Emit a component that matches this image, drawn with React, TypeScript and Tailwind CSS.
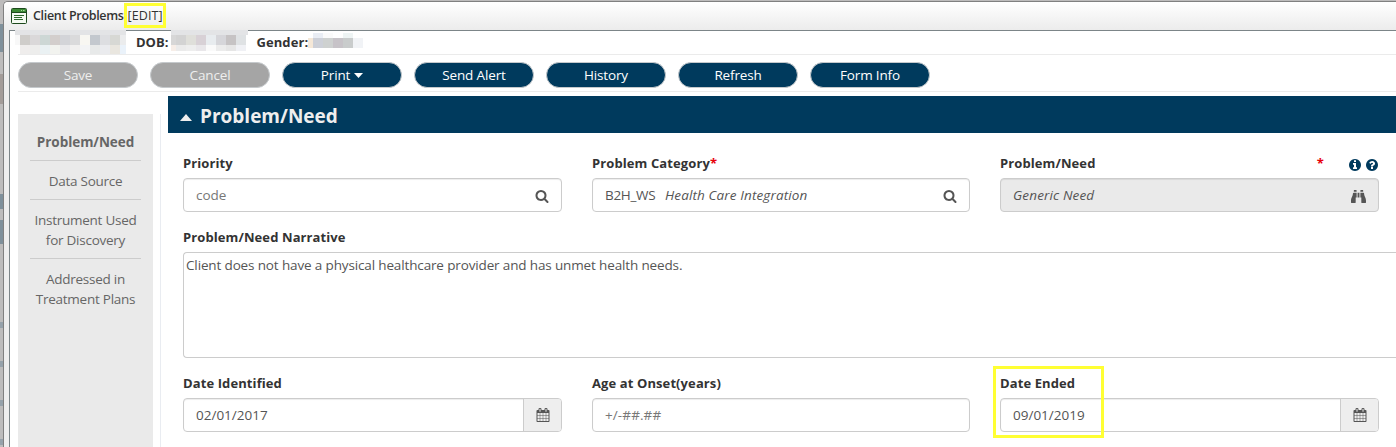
import React from "react";
import { FaBinoculars } from "react-icons/fa";

const SEARCH = "M1216 832q0-185-131.5-316.5t-316.5-131.5-316.5 131.5-131.5 316.5 131.5 316.5 316.5 131.5 316.5-131.5 131.5-316.5zm512 832q0 52-38 90t-90 38q-54 0-90-38l-343-342q-179 124-399 124-143 0-273.5-55.5t-225-150-150-225-55.5-273.5 55.5-273.5 150-225 225-150 273.5-55.5 273.5 55.5 225 150 150 225 55.5 273.5q0 220-124 399l343 343q37 37 37 90z";
const INFO = "M1152 1376v-160q0-14-9-23t-23-9h-96v-512q0-14-9-23t-23-9h-320q-14 0-23 9t-9 23v160q0 14 9 23t23 9h96v320h-96q-14 0-23 9t-9 23v160q0 14 9 23t23 9h448q14 0 23-9t9-23zm-128-896v-160q0-14-9-23t-23-9h-192q-14 0-23 9t-9 23v160q0 14 9 23t23 9h192q14 0 23-9t9-23zm640 416q0 209-103 385.5t-279.5 279.5-385.5 103-385.5-103-279.5-279.5-103-385.5 103-385.5 279.5-279.5 385.5-103 385.5 103 279.5 279.5 103 385.5z";
const HELP = "M1024 1376v-192q0-14-9-23t-23-9h-192q-14 0-23 9t-9 23v192q0 14 9 23t23 9h192q14 0 23-9t9-23zm256-672q0-88-55.5-163t-138.5-116-170-41q-243 0-371 213-15 24 8 42l132 100q7 6 19 6 16 0 25-12 53-68 86-92 34-24 86-24 48 0 85.5 26t37.5 59q0 38-20 61t-68 45q-63 28-115.5 86.5t-52.5 125.5v36q0 14 9 23t23 9h192q14 0 23-9t9-23q0-19 21.5-49.5t54.5-49.5q32-18 49-28.5t46-35 44.5-48 28-60.5 12.5-81zm384 192q0 209-103 385.5t-279.5 279.5-385.5 103-385.5-103-279.5-279.5-103-385.5 103-385.5 279.5-279.5 385.5-103 385.5 103 279.5 279.5 103 385.5z";
const CALENDAR = "M192 1664h288v-288h-288v288zm352 0h320v-288h-320v288zm-352-352h288v-320h-288v320zm352 0h320v-320h-320v320zm-352-384h288v-288h-288v288zm736 736h320v-288h-320v288zm-384-736h320v-288h-320v288zm768 736h288v-288h-288v288zm-384-352h320v-320h-320v320zm-352-864v-288q0-13-9.5-22.5t-22.5-9.5h-64q-13 0-22.5 9.5t-9.5 22.5v288q0 13 9.5 22.5t22.5 9.5h64q13 0 22.5-9.5t9.5-22.5zm736 864h288v-320h-288v320zm-384-384h320v-288h-320v288zm384 0h288v-288h-288v288zm32-480v-288q0-13-9.5-22.5t-22.5-9.5h-64q-13 0-22.5 9.5t-9.5 22.5v288q0 13 9.5 22.5t22.5 9.5h64q13 0 22.5-9.5t9.5-22.5zm384-64v1280q0 52-38 90t-90 38h-1408q-52 0-90-38t-38-90v-1280q0-52 38-90t90-38h128v-96q0-66 47-113t113-47h64q66 0 113 47t47 113v96h384v-96q0-66 47-113t113-47h64q66 0 113 47t47 113v96h128q52 0 90 38t38 90z";

function Glyph({ d, className }: { d: string; className: string }) {
  return (
    <svg viewBox="0 0 1792 1792" className={className} fill="currentColor">
      <path d={d} />
    </svg>
  );
}

function FormIcon() {
  return (
    <svg viewBox="0 0 16 16" className="h-4 w-4 shrink-0">
      <rect x="0.5" y="0.5" width="15" height="15" rx="1" fill="#f4faf2" stroke="#1d4a1d" />
      <path d="M1 1h14v3H1z" fill="#3c8a35" />
      <path d="M1 4.5h14" stroke="#1d4a1d" />
      <path d="M10 2.5h1M12 2.5h1.5" stroke="#a5e09c" />
      <path d="M3 7.5h10M3 9.5h8M3 11.5h9" stroke="#2f6a2d" />
    </svg>
  );
}

function Cells({ colors, className }: { colors: string[]; className: string }) {
  return (
    <div className={`flex ${className}`}>
      {colors.map((c, i) => (
        <div key={i} className="w-[10px] shrink-0" style={{ backgroundColor: c }} />
      ))}
    </div>
  );
}

const actions = [
  { label: "Save", off: true },
  { label: "Cancel", off: true },
  { label: "Print", menu: true },
  { label: "Send Alert" },
  { label: "History" },
  { label: "Refresh" },
  { label: "Form Info" },
];

function Label({ children }: { children: React.ReactNode }) {
  return <div className="flex h-[20px] items-center text-[13px] leading-[20px] font-bold tracking-[0.1px] whitespace-pre text-[#333]">{children}</div>;
}

function Box({ children, muted = false }: { children: React.ReactNode; muted?: boolean }) {
  return (
    <div className={`mt-[5px] flex h-[34px] items-stretch overflow-hidden rounded-[4px] border border-[#ccc] text-[13.5px] text-[#555] shadow-[inset_0_1px_1px_rgba(0,0,0,0.075)] ${muted ? "bg-[#eaeaea]" : "bg-white"}`}>
      {children}
    </div>
  );
}

function DateField({ label, value }: { label: string; value: string }) {
  return (
    <div>
      <Label>{label}</Label>
      <Box>
        <span className="flex flex-1 items-center pt-px pl-3">{value}</span>
        <span className="flex w-[38px] items-center justify-center border-l border-[#ccc] bg-[#eee]">
          <Glyph d={CALENDAR} className="h-[14px] w-[14px]" />
        </span>
      </Box>
    </div>
  );
}

export default function App() {
  return (
    <div className="relative flex h-[447px] w-[1396px] overflow-hidden bg-[#bdbcbc] font-['Open_Sans','Noto_Sans',sans-serif]">
      <div className="flex w-[3px] shrink-0 flex-col pt-6">
        <div className="h-[28px] bg-[#7f909b]" />
        <div className="mt-[22px] h-[30px] bg-[#a39c99]" />
        <div className="mt-[90px] h-[15px] bg-[#7f909b]" />
        <div className="mt-[11px] h-[24px] bg-[#7f909b]" />
        <div className="mt-[78px] h-[6px] bg-[#96a2ab]" />
        <div className="mt-[33px] h-[6px] bg-[#96a2ab]" />
        <div className="mt-[33px] h-[6px] bg-[#96a2ab]" />
        <div className="mt-[33px] h-[6px] bg-[#96a2ab]" />
      </div>
      <div className="mt-px flex min-w-0 flex-1 flex-col rounded-tl-[5px] border-t border-l border-[#808080] bg-[#eee]">
        <header className="flex h-[28px] shrink-0 items-center rounded-tl-[4px] bg-linear-to-b from-white to-[#ececec] pl-[7px] text-[12.5px] text-[#333]">
          <FormIcon />
          <span className="ml-[6px] pt-px font-semibold tracking-[-0.32px]">Client Problems <span className="ml-px font-normal tracking-[0.1px]">[EDIT]</span></span>
        </header>
        <main className="ml-[5px] flex min-h-0 flex-1 flex-col border-t border-l border-[#7c8588] bg-white">
          <div className="ml-2 flex h-[24px] shrink-0 items-center border-b border-[#ebebeb] text-[13px] font-bold text-[#333]">
            <div className="-mt-px -ml-[3px] flex h-[24px] w-[111px] shrink-0 flex-col self-start overflow-hidden bg-white">
              <div className="h-[5px] bg-[#e3e4e6]" />
              <Cells className="-ml-[5px] h-[10px]" colors={["#f8f8f8", "#cfcdca", "#dad8d9", "#cdd7d5", "#d3cecc", "#d3d4d8", "#dadadb", "#f8f7f2", "#c3c8ce", "#dddee1", "#d7d8d4", "#ebeced"]} />
              <Cells className="-ml-[5px] h-[9px]" colors={["#ffffff", "#efedec", "#ededec", "#eaf1f3", "#f2f3ef", "#e9e9eb", "#f1f0ef", "#f3f4f5", "#e7e9e9", "#eaebee", "#e9e6df", "#eaf2fa"]} />
            </div>
            <span className="ml-[10px]">DOB:</span>
            <div className="-mt-px ml-[3px] flex h-[21px] w-[77px] shrink-0 flex-col self-start overflow-hidden bg-white">
              <div className="h-[5px] bg-[#e3e4e6]" />
              <Cells className="-ml-[5px] h-[10px]" colors={["#d7d7d7", "#d3d3d3", "#dfdfda", "#d8d1d6", "#e8ecef", "#d6d6da", "#c6c3c4", "#dfe2e4"]} />
              <Cells className="-ml-[5px] h-[6px]" colors={["#f7eee8", "#ebebeb", "#eeeeee", "#e9e7ea", "#fafafa", "#ececec", "#e6e6e6", "#f0f1f5"]} />
            </div>
            <span className="ml-[8px] tracking-[0.1px]">Gender:</span>
            <div className="mt-[2px] flex h-[15px] w-[56px] shrink-0 flex-col self-start overflow-hidden">
              <Cells className="-ml-[5px] h-[5px]" colors={["#ffffff", "#e9edf4", "#fafafa", "#ffffff", "#eef4f4", "#ffffff"]} />
              <Cells className="-ml-[5px] h-[10px]" colors={["#f5e8d8", "#cdd0d8", "#ced1d0", "#c7c3c8", "#c9cccc", "#f1f3f6"]} />
            </div>
          </div>
          <div className="ml-2 flex h-[37px] shrink-0 items-start gap-3 border-b border-[#ebebeb] pt-[7px]">
            {actions.map((a) => (
              <button key={a.label} className={`flex h-[26px] w-[120px] items-center justify-center gap-1 rounded-full border border-[#c5c9cc] pt-px text-[13.5px] tracking-[-0.15px] ${a.off ? "bg-[#a5a5a5] text-[#eee]" : "bg-[#003a5d] text-white"}`}>
                {a.label}
                {a.menu && <svg viewBox="0 0 9 5" className="h-[5px] w-[9px]"><path d="M0 0h9L4.5 5z" fill="white" /></svg>}
              </button>
            ))}
          </div>
          <div className="flex min-h-0 flex-1 pl-2">
            <nav className="mt-[22px] flex w-[135px] shrink-0 flex-col items-center bg-[#eaeaea] px-3 pt-[18px] text-center text-[13.5px] leading-[20px] tracking-[-0.25px] text-[#666]">
              <div className="h-[29px] w-[111px] border-b border-[#ccc] font-bold tracking-[-0.05px]">Problem/Need</div>
              <div className="h-[39px] w-[111px] border-b border-[#ccc] pt-[10px]">Data Source</div>
              <div className="h-[59px] w-[111px] border-b border-[#ccc] pt-[10px]">Instrument Used<br />for Discovery</div>
              <div className="w-[111px] pt-[10px]">Addressed in<br />Treatment Plans</div>
            </nav>
            <div className="mt-[22px] ml-[7px] w-px shrink-0 bg-[#e9ecf1]" />
            <section className="ml-[7px] flex min-w-0 flex-1 flex-col pt-[4px]">
              <h1 className="flex h-[37px] shrink-0 items-center bg-[#003a5d] pt-[3px] pl-[12px] text-[19px] font-bold text-[#eee]">
                <svg viewBox="0 0 12 7" className="mt-[3px] mr-[8px] h-[7px] w-[12px]"><path d="M0 7h12L6 0z" fill="#eee" /></svg>
                Problem/Need
              </h1>
              <div className="ml-[15px] grid shrink-0 grid-cols-[379px_378px_379px] gap-x-[30px] pt-5">
                <div>
                  <Label>Priority</Label>
                  <Box>
                    <span className="flex flex-1 items-center pl-3 text-[#777]">code</span>
                    <span className="flex items-center pt-0.5 pr-3"><Glyph d={SEARCH} className="h-[14px] w-[14px]" /></span>
                  </Box>
                </div>
                <div>
                  <Label>Problem Category<span className="font-bold text-red-600">*</span></Label>
                  <Box>
                    <span className="flex w-[72px] items-center pl-3 tracking-[-0.3px]">B2H_WS</span>
                    <span className="flex flex-1 items-center tracking-[0.12px] italic">Health Care Integration</span>
                    <span className="flex items-center pt-0.5 pr-3"><Glyph d={SEARCH} className="h-[14px] w-[14px]" /></span>
                  </Box>
                </div>
                <div>
                  <Label>
                    Problem/Need
                    <span className="ml-auto font-bold text-red-600">*</span>
                    <span className="ml-[24px] flex gap-[3px] pt-[3px] text-[#003a5d]">
                      <Glyph d={INFO} className="h-[14px] w-[14px]" />
                      <Glyph d={HELP} className="h-[14px] w-[14px]" />
                    </span>
                  </Label>
                  <Box muted>
                    <span className="flex flex-1 items-center pl-3 tracking-[0.15px] italic">Generic Need</span>
                    <span className="flex items-center pt-0.5 pr-3"><FaBinoculars className="h-[15px] w-[15px]" /></span>
                  </Box>
                </div>
              </div>
              <div className="mt-[15px] ml-[15px] shrink-0">
                <Label>Problem/Need Narrative</Label>
                <div className="mt-[5px] h-[106px] rounded-l-[4px] border border-r-0 border-[#ccc] pt-[2px] pl-[2px] text-[13.5px] leading-[20px] tracking-[-0.14px] text-[#555]">
                  Client does not have a physical healthcare provider and has unmet health needs.
                </div>
              </div>
              <div className="ml-[15px] grid shrink-0 grid-cols-[379px_378px_379px] gap-x-[30px] pt-[15px]">
                <DateField label="Date Identified" value="02/01/2017" />
                <div>
                  <Label>Age at Onset(years)</Label>
                  <Box><span className="flex items-center pl-3 tracking-[0.1px] text-[#777]">+/-##.##</span></Box>
                </div>
                <DateField label="Date Ended" value="09/01/2019" />
              </div>
            </section>
          </div>
        </main>
      </div>
      <div className="absolute top-[3px] left-[124px] h-[25px] w-[42px] border-[3px] border-[#ffff33]" />
      <div className="absolute top-[366px] left-[993px] h-[72px] w-[111px] border-[3px] border-[#ffff33]" />
    </div>
  );
}
